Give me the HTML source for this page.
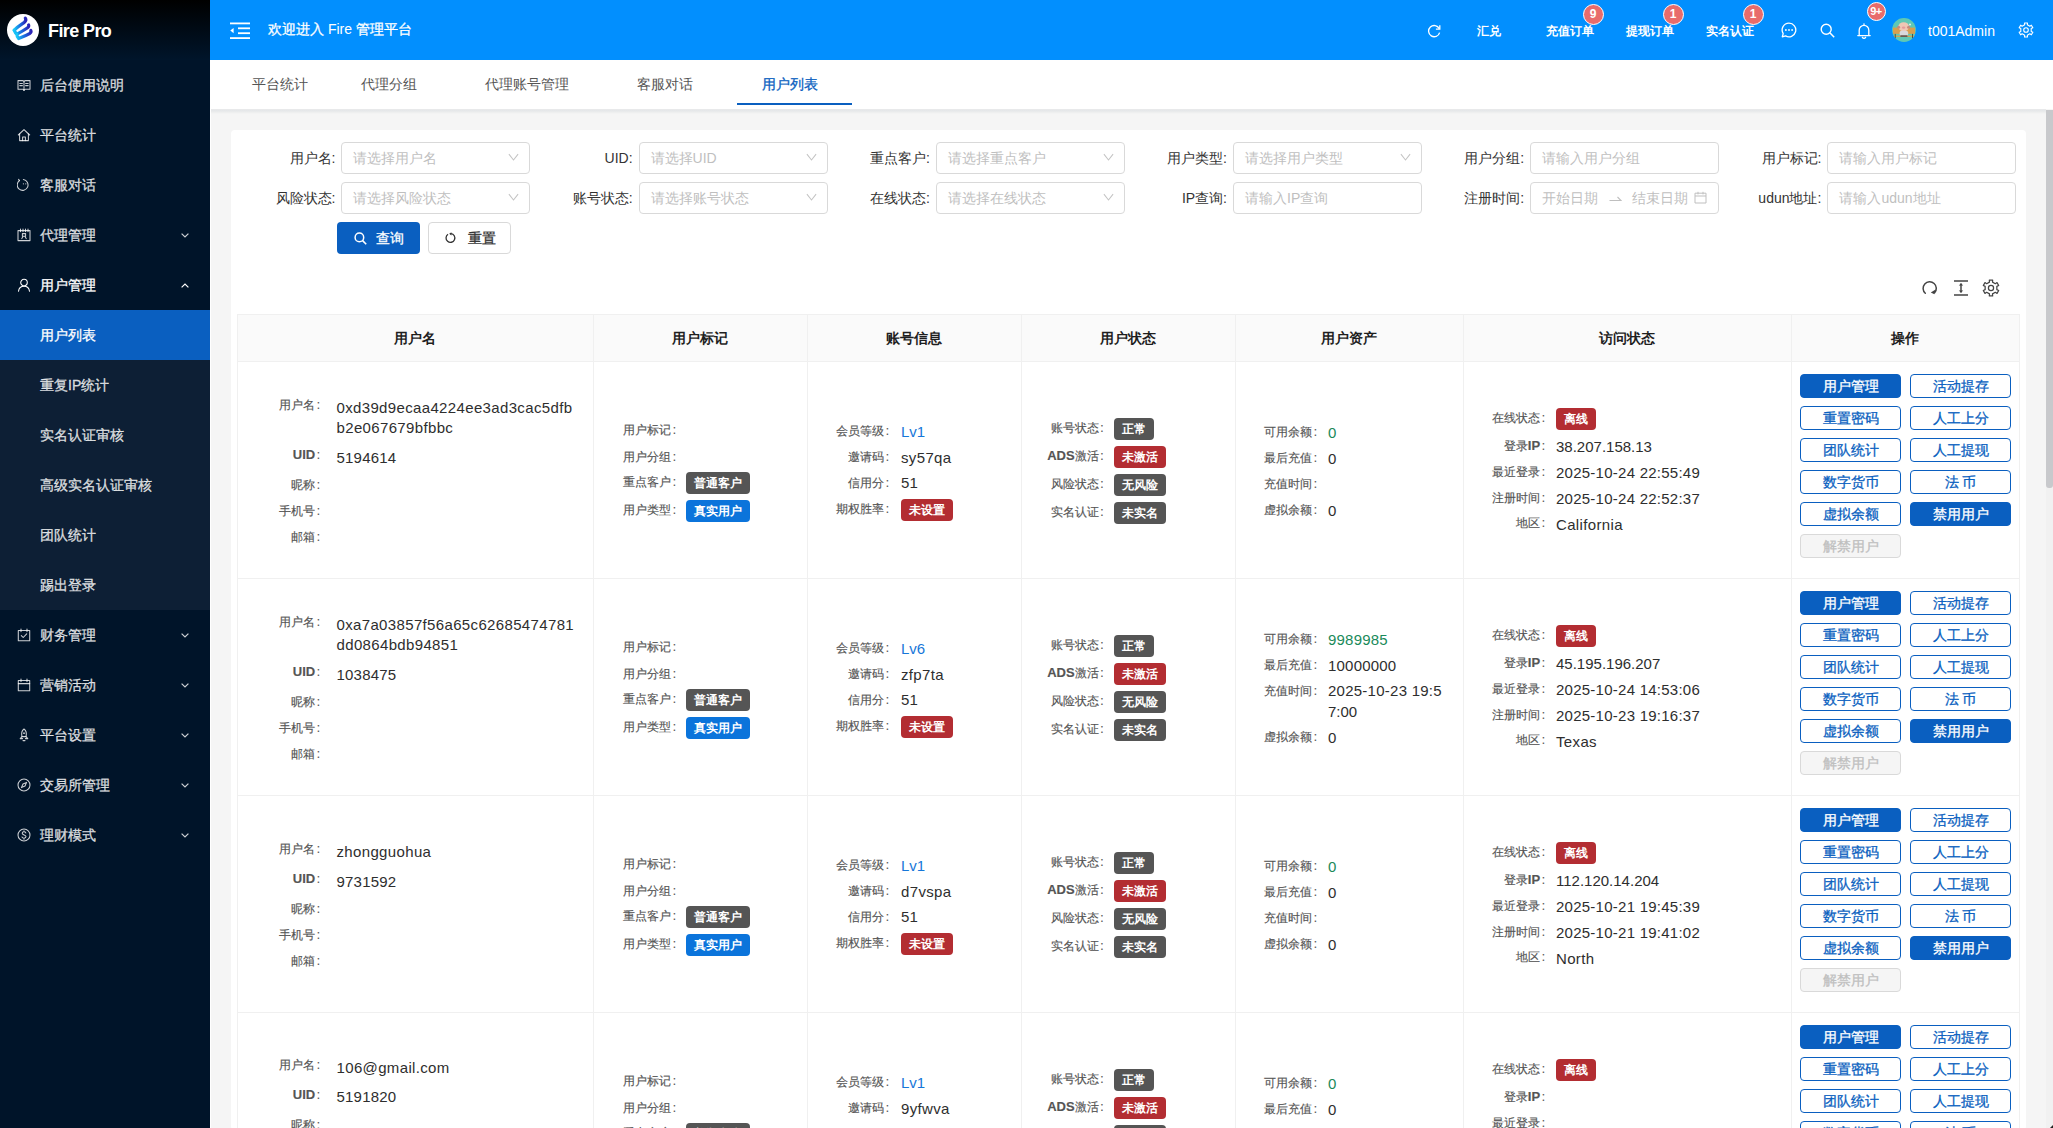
<!DOCTYPE html>
<html><head><meta charset="utf-8"><style>
*{margin:0;padding:0;box-sizing:border-box}
html,body{width:2053px;height:1128px;overflow:hidden;background:#f5f5f5;font-family:"Liberation Sans",sans-serif;color:#333}
.abs{position:absolute}
#side{position:absolute;left:0;top:0;width:210px;height:1128px;background:#001429}
#logo{position:absolute;left:0;top:0;width:210px;height:60px;background:linear-gradient(180deg,#000 0%,#00152b 100%)}
.mi{position:absolute;left:0;width:210px;height:50px;color:rgba(255,255,255,.8);font-size:14px;line-height:50px}
.mi .t{-webkit-text-stroke:0.3px currentColor}
.mi .t{position:absolute;left:40px;top:0}
.mi svg.ic{position:absolute;left:17px;top:18px}
.mi svg.ch{position:absolute;left:181px;top:23px}
#sub{position:absolute;left:0;top:310px;width:210px;height:300px;background:#0d1f35}
#hdr{position:absolute;left:210px;top:0;width:1843px;height:60px;background:#028ffe}
#tabs{position:absolute;left:211px;top:60px;width:1842px;height:49px;background:#fff}
.tab{position:absolute;top:0;line-height:48px;font-size:14px;color:#555}
#card{position:absolute;left:231px;top:130px;width:1795px;height:1000px;background:#fff;border-radius:4px}
.fl{position:absolute;font-size:14px;color:#333;text-align:right;line-height:32px;white-space:nowrap}
.fi{position:absolute;width:189px;height:32px;border:1px solid #d9d9d9;border-radius:4px;background:#fff;font-size:14px;color:#bfbfbf;line-height:30px;padding-left:11px;white-space:nowrap}
.fi svg{position:absolute;right:10px;top:10.4px}
.th{position:absolute;top:314px;height:48px;background:#fafafa;border-top:1px solid #f0f0f0;border-bottom:1px solid #f0f0f0;font-size:14px;font-weight:bold;color:#222;text-align:center;line-height:46px}
.vl{position:absolute;width:1px;background:#f0f0f0}
.hl{position:absolute;height:1px;background:#f0f0f0}
.lb{position:absolute;font-size:12px;color:#555;text-align:right;white-space:nowrap;line-height:16px;-webkit-text-stroke:0.15px #555}
.cl{margin-left:1.5px}
.vv{position:absolute;font-size:15px;color:#2e2e2e;white-space:nowrap;line-height:20px}
.tg{position:absolute;height:22px;border-radius:4px;color:#fff;font-size:12px;font-weight:bold;line-height:22px;text-align:center}
.g{background:#555}.b{background:#0b74db}.r{background:#b32d32}
.bt{position:absolute;width:101px;height:24px;border:1px solid #0a5fc0;border-radius:4px;color:#0a5fc0;font-size:14px;-webkit-text-stroke:0.3px currentColor;text-align:center;line-height:22px;background:#fff}
.bt.p{background:#0a5fc0;color:#fff}
.bt.d{background:#f5f5f5;border-color:#d9d9d9;color:#bfbfbf}

</style></head><body>
<div id="side">
<div id="logo">
<div class="abs" style="left:7px;top:14px;width:32px;height:32px;border-radius:50%;background:#fff"></div>
<svg class="abs" style="left:0;top:0" width="42" height="50" viewBox="0 0 42 50"><defs><linearGradient id="lg" x1="0" y1="0" x2="1" y2="0"><stop offset="0" stop-color="#18c8f8"/><stop offset="0.5" stop-color="#1a6fe0"/><stop offset="1" stop-color="#2b22b5"/></linearGradient></defs><g fill="none" stroke="url(#lg)" stroke-width="3.2" stroke-linecap="round"><path d="M14.2 30.2C17.5 26.8 21 24.6 24 22.6 25.8 21.3 26.2 19.6 25.3 18.2"/><path d="M14.2 30.2C14.8 32 15.6 33.2 17 34.2 20.5 32.2 24.5 29.8 27.2 28 28.6 27 28.9 25.8 28.6 25"/><path d="M17 34.2C16.8 36 17.4 37.4 18.6 38.4 22.5 37 26.5 35.4 29.5 33.6 31 32.6 31.2 31.2 30.8 30.4"/></g></svg>
<div class="abs" style="left:48px;top:20px;font-size:18px;font-weight:bold;color:#fff;line-height:22px;letter-spacing:-0.6px">Fire Pro</div>
</div>
<div id="sub"></div>
<div class="abs" style="left:0;top:310px;width:210px;height:50px;background:#0a5fc0"></div>
<div class="mi" style="top:60px"><svg class="ic" width="14" height="14" viewBox="0 0 14 14" ><g stroke="currentColor" fill="none" stroke-width="1.05" stroke-linecap="round" stroke-linejoin="round"><path d="M1 2.6h4.6c.8 0 1.4.4 1.4 1.2 0-.8.6-1.2 1.4-1.2H13v8.6H8.4c-.8 0-1.4.5-1.4 1.2 0-.7-.6-1.2-1.4-1.2H1z"/><path d="M7 3.8v8.6M2.8 5.4h2.6M2.8 7.6h2.6M8.6 5.4h2.6M8.6 7.6h2.6"/></g></svg><span class="t">后台使用说明</span></div>
<div class="mi" style="top:110px"><svg class="ic" width="14" height="14" viewBox="0 0 14 14" ><g stroke="currentColor" fill="none" stroke-width="1.05" stroke-linecap="round" stroke-linejoin="round"><path d="M1.3 7L7 1.6 12.7 7"/><path d="M2.6 5.8V12.6h8.8V5.8"/><path d="M5.6 12.6V9h2.8v3.6"/></g></svg><span class="t">平台统计</span></div>
<div class="mi" style="top:160px"><svg class="ic" width="14" height="14" viewBox="0 0 14 14" ><g stroke="currentColor" fill="none" stroke-width="1.05" stroke-linecap="round" stroke-linejoin="round"><path d="M2.4 2.6A5.4 5.4 0 1 0 6.4 1.6"/><path d="M2.4 2.6L1.6 1.4"/></g><circle cx="6.4" cy="5.8" r=".6" fill="currentColor"/><circle cx="8.8" cy="5.8" r=".6" fill="currentColor"/></svg><span class="t">客服对话</span></div>
<div class="mi" style="top:210px"><svg class="ic" width="14" height="14" viewBox="0 0 14 14" ><g stroke="currentColor" fill="none" stroke-width="1.05" stroke-linecap="round" stroke-linejoin="round"><path d="M1 2.6h12v10H1z"/><path d="M3.5 1v2.6M6 1v2.6M8.5 1v2.6M11 1v2.6"/><path d="M5.4 5.6h3.2v2.6H5.4zM4.8 10.6L6 8.6M9.2 10.6L8 8.6"/></g></svg><span class="t">代理管理</span><svg class="ch" width="8" height="5" viewBox="0 0 8 5" ><path d="M.6 .6L4 4 7.4 .6" stroke="currentColor" fill="none" stroke-width="1.2"/></svg></div>
<div class="mi" style="top:260px;color:#fff"><svg class="ic" width="14" height="14" viewBox="0 0 14 14" ><g stroke="currentColor" fill="none" stroke-width="1.05" stroke-linecap="round" stroke-linejoin="round"><circle cx="7" cy="4.6" r="3.3"/><path d="M1.5 13.2c.4-3 2.6-5 5.5-5s5.1 2 5.5 5"/></g></svg><span class="t">用户管理</span><svg class="ch" width="8" height="5" viewBox="0 0 8 5" ><path d="M.6 4.4L4 1 7.4 4.4" stroke="currentColor" fill="none" stroke-width="1.2"/></svg></div>
<div class="mi" style="top:310px;color:#fff"><span class="t">用户列表</span></div>
<div class="mi" style="top:360px"><span class="t">重复IP统计</span></div>
<div class="mi" style="top:410px"><span class="t">实名认证审核</span></div>
<div class="mi" style="top:460px"><span class="t">高级实名认证审核</span></div>
<div class="mi" style="top:510px"><span class="t">团队统计</span></div>
<div class="mi" style="top:560px"><span class="t">踢出登录</span></div>
<div class="mi" style="top:610px"><svg class="ic" width="14" height="14" viewBox="0 0 14 14" ><g stroke="currentColor" fill="none" stroke-width="1.05" stroke-linecap="round" stroke-linejoin="round"><path d="M1.3 2.5h11.4v10.2H1.3z"/><path d="M4 1v2.6M10 1v2.6"/><path d="M4.3 7.6l1.9 1.9 3.5-3.6"/></g></svg><span class="t">财务管理</span><svg class="ch" width="8" height="5" viewBox="0 0 8 5" ><path d="M.6 .6L4 4 7.4 .6" stroke="currentColor" fill="none" stroke-width="1.2"/></svg></div>
<div class="mi" style="top:660px"><svg class="ic" width="14" height="14" viewBox="0 0 14 14" ><g stroke="currentColor" fill="none" stroke-width="1.05" stroke-linecap="round" stroke-linejoin="round"><path d="M1.3 2.5h11.4v10.2H1.3z"/><path d="M4 1v2.6M10 1v2.6M1.3 5.6h11.4"/></g></svg><span class="t">营销活动</span><svg class="ch" width="8" height="5" viewBox="0 0 8 5" ><path d="M.6 .6L4 4 7.4 .6" stroke="currentColor" fill="none" stroke-width="1.2"/></svg></div>
<div class="mi" style="top:710px"><svg class="ic" width="14" height="14" viewBox="0 0 14 14" ><g stroke="currentColor" fill="none" stroke-width="1.05" stroke-linecap="round" stroke-linejoin="round"><path d="M7 1c2.2 1.6 2.8 4.3 2 7.6H5C4.2 5.3 4.8 2.6 7 1z"/><path d="M5 8.6L3.2 10.6 5.6 10.6M9 8.6l1.8 2-2.4 0"/><path d="M6 12.6h2"/></g><circle cx="7" cy="5.2" r=".9" fill="currentColor"/></svg><span class="t">平台设置</span><svg class="ch" width="8" height="5" viewBox="0 0 8 5" ><path d="M.6 .6L4 4 7.4 .6" stroke="currentColor" fill="none" stroke-width="1.2"/></svg></div>
<div class="mi" style="top:760px"><svg class="ic" width="14" height="14" viewBox="0 0 14 14" ><g stroke="currentColor" fill="none" stroke-width="1.05" stroke-linecap="round" stroke-linejoin="round"><circle cx="7" cy="7" r="6"/><path d="M9.6 4.4L8 8 4.4 9.6 6 6z"/></g></svg><span class="t">交易所管理</span><svg class="ch" width="8" height="5" viewBox="0 0 8 5" ><path d="M.6 .6L4 4 7.4 .6" stroke="currentColor" fill="none" stroke-width="1.2"/></svg></div>
<div class="mi" style="top:810px"><svg class="ic" width="14" height="14" viewBox="0 0 14 14" ><g stroke="currentColor" fill="none" stroke-width="1.05" stroke-linecap="round" stroke-linejoin="round"><circle cx="7" cy="7" r="6"/><path d="M8.8 4.9c-.3-.7-1-1.1-1.8-1.1-1 0-1.8.6-1.8 1.5 0 2 3.8 1.2 3.8 3.3 0 .9-.9 1.6-2 1.6-.9 0-1.6-.4-2-1.2M7 2.8v1M7 10.2v1"/></g></svg><span class="t">理财模式</span><svg class="ch" width="8" height="5" viewBox="0 0 8 5" ><path d="M.6 .6L4 4 7.4 .6" stroke="currentColor" fill="none" stroke-width="1.2"/></svg></div>
<div class="abs" style="left:210px;top:60px;width:1px;height:1068px;background:#fff"></div>
</div>
<div id="hdr">
<svg class="abs" style="left:20px;top:22px" width="20" height="18" viewBox="0 0 20 18"><g fill="#fff"><rect x="0" y="0.5" width="20" height="1.8"/><rect x="8" y="5.4" width="12" height="1.8"/><rect x="8" y="10.3" width="12" height="1.8"/><rect x="0" y="15.2" width="20" height="1.8"/><path d="M0.3 8.6L3.6 6v5.2z"/></g></svg>
<div class="abs" style="left:58px;top:18px;font-size:14px;color:#fff;line-height:22px;-webkit-text-stroke:0.3px #fff">欢迎进入 <span style="-webkit-text-stroke:0">Fire</span> 管理平台</div>
<svg class="abs" style="left:1217px;top:24px" width="14" height="14" viewBox="0 0 14 14"><path d="M12.2 4.6A5.6 5.6 0 1 0 12.6 8.6" stroke="#fff" fill="none" stroke-width="1.3"/><path d="M12.8 1.2v3.9H8.9" stroke="#fff" fill="none" stroke-width="1.3"/></svg>
<div class="abs" style="left:1267px;top:22px;font-size:12px;font-weight:bold;color:#fff;line-height:18px">汇兑</div>
<div class="abs" style="left:1336px;top:22px;font-size:12px;font-weight:bold;color:#fff;line-height:18px">充值订单</div>
<div class="abs" style="left:1416px;top:22px;font-size:12px;font-weight:bold;color:#fff;line-height:18px">提现订单</div>
<div class="abs" style="left:1496px;top:22px;font-size:12px;font-weight:bold;color:#fff;line-height:18px">实名认证</div>
<div class="abs" style="left:1372.5px;top:4.1px;width:21px;height:21px;border-radius:11px;background:#e86c6c;border:1px solid #fff;color:#fff;font-size:12px;font-weight:bold;text-align:center;line-height:19px">9</div>
<div class="abs" style="left:1452.5px;top:4.1px;width:21px;height:21px;border-radius:11px;background:#e86c6c;border:1px solid #fff;color:#fff;font-size:12px;font-weight:bold;text-align:center;line-height:19px">1</div>
<div class="abs" style="left:1532.5px;top:4.1px;width:21px;height:21px;border-radius:11px;background:#e86c6c;border:1px solid #fff;color:#fff;font-size:12px;font-weight:bold;text-align:center;line-height:19px">1</div>
<svg class="abs" style="left:1571px;top:22px" width="16" height="16" viewBox="0 0 16 16"><path d="M8 1.2a6.8 6.8 0 1 1-3.4 12.7L1.3 14.8l.9-3.2A6.8 6.8 0 0 1 8 1.2z" stroke="#fff" fill="none" stroke-width="1.3" stroke-linejoin="round"/><circle cx="4.9" cy="8" r=".9" fill="#fff"/><circle cx="8" cy="8" r=".9" fill="#fff"/><circle cx="11.1" cy="8" r=".9" fill="#fff"/></svg>
<svg class="abs" style="left:1610px;top:23px" width="15" height="15" viewBox="0 0 15 15"><circle cx="6.2" cy="6.2" r="5" stroke="#fff" fill="none" stroke-width="1.4"/><path d="M9.8 9.8l4.4 4.4" stroke="#fff" stroke-width="1.5"/></svg>
<svg class="abs" style="left:1647px;top:23px" width="14" height="16" viewBox="0 0 14 16"><path d="M2.2 12.6V7.2A4.8 4.8 0 0 1 7 2.4a4.8 4.8 0 0 1 4.8 4.8v5.4M.8 12.6h12.4M5.4 14.4c.4.6 1 .9 1.6.9s1.2-.3 1.6-.9M7 .8v1.6" stroke="#fff" fill="none" stroke-width="1.3" stroke-linecap="round"/></svg>
<div class="abs" style="left:1656.5px;top:1.5px;width:19px;height:19px;border-radius:10px;background:#e86c6c;border:1px solid #fff;color:#fff;font-size:11px;font-weight:bold;text-align:center;line-height:17px;letter-spacing:-0.5px">9+</div>
<svg class="abs" style="left:1682px;top:18px" width="24" height="24" viewBox="0 0 24 24"><defs><clipPath id="avc"><circle cx="12" cy="12" r="11.9"/></clipPath></defs><g clip-path="url(#avc)"><rect width="24" height="24" fill="#5fc8b4"/><rect x="1" y="9.6" width="22" height="6.3" fill="#d7a04f"/><rect x="2" y="17.6" width="20" height="1.3" fill="#dba24e"/><rect x="2.8" y="15.9" width=".8" height="4.6" fill="#3a3a3a"/><rect x="20.2" y="15.9" width=".8" height="4.6" fill="#3a3a3a"/><ellipse cx="11.7" cy="8.8" rx="5.4" ry="4.6" fill="#efc7b4"/><circle cx="6.6" cy="9.2" r="1.5" fill="#c98a7c"/><circle cx="16.6" cy="9.2" r="1.5" fill="#c98a7c"/><ellipse cx="11.6" cy="9.6" rx="1.8" ry="1.2" fill="#e59a9a"/><rect x="7.6" y="12.8" width="8.6" height="5.2" rx="2" fill="#d8d8dc"/><rect x="8.4" y="17.2" width="7" height="1.8" fill="#6e5a52"/><circle cx="18" cy="6.6" r="1" fill="#e8f0f0"/></g></svg>
<div class="abs" style="left:1718px;top:22px;font-size:14px;color:#fff;line-height:18px">t001Admin</div>
<svg class="abs" style="left:1808px;top:22px;color:#fff" width="16" height="16" viewBox="0 0 16 16"><path d="M6.66 2.77L6.52 0.95L9.48 0.95L9.34 2.77L11.86 4.22L13.36 3.19L14.84 5.76L13.20 6.55L13.20 9.45L14.84 10.24L13.36 12.81L11.86 11.78L9.34 13.23L9.48 15.05L6.52 15.05L6.66 13.23L4.14 11.78L2.64 12.81L1.16 10.24L2.80 9.45L2.80 6.55L1.16 5.76L2.64 3.19L4.14 4.22Z" stroke="currentColor" fill="none" stroke-width="1.1" stroke-linejoin="round"/><circle cx="8" cy="8" r="2.3" stroke="currentColor" fill="none" stroke-width="1.1"/></svg>
</div>
<div id="tabs">
<div class="tab" style="left:41px;color:#555">平台统计</div>
<div class="tab" style="left:150px;color:#555">代理分组</div>
<div class="tab" style="left:274px;color:#555">代理账号管理</div>
<div class="tab" style="left:426px;color:#555">客服对话</div>
<div class="tab" style="left:551px;color:#0a5fc0;-webkit-text-stroke:0.3px #0a5fc0">用户列表</div>
<div class="abs" style="left:526px;top:42.5px;width:115px;height:2px;background:#0a5fc0"></div>
</div>
<div class="abs" style="left:211px;top:109px;width:1835px;height:5px;background:linear-gradient(180deg,#e9eaeb 0%,#e5e7e9 35%,#eeefef 70%,#f5f5f5 100%)"></div>
<div id="card"></div>
<div class="fl" style="left:191.39999999999998px;top:142px;width:144px">用户名:</div>
<div class="fi" style="left:341.4px;top:142px">请选择用户名<svg width="11" height="8" viewBox="0 0 11 8"><path d="M.9 1.2L5.5 7 10.1 1.2" stroke="#c4c4c4" fill="none" stroke-width="1.05"/></svg></div>
<div class="fl" style="left:488.6px;top:142px;width:144px">UID:</div>
<div class="fi" style="left:638.6px;top:142px">请选择UID<svg width="11" height="8" viewBox="0 0 11 8"><path d="M.9 1.2L5.5 7 10.1 1.2" stroke="#c4c4c4" fill="none" stroke-width="1.05"/></svg></div>
<div class="fl" style="left:785.8px;top:142px;width:144px">重点客户:</div>
<div class="fi" style="left:935.8px;top:142px">请选择重点客户<svg width="11" height="8" viewBox="0 0 11 8"><path d="M.9 1.2L5.5 7 10.1 1.2" stroke="#c4c4c4" fill="none" stroke-width="1.05"/></svg></div>
<div class="fl" style="left:1083.0px;top:142px;width:144px">用户类型:</div>
<div class="fi" style="left:1233.0px;top:142px">请选择用户类型<svg width="11" height="8" viewBox="0 0 11 8"><path d="M.9 1.2L5.5 7 10.1 1.2" stroke="#c4c4c4" fill="none" stroke-width="1.05"/></svg></div>
<div class="fl" style="left:1380.2px;top:142px;width:144px">用户分组:</div>
<div class="fi" style="left:1530.2px;top:142px">请输入用户分组</div>
<div class="fl" style="left:1677.4px;top:142px;width:144px">用户标记:</div>
<div class="fi" style="left:1827.4px;top:142px">请输入用户标记</div>
<div class="fl" style="left:191.39999999999998px;top:182px;width:144px">风险状态:</div>
<div class="fi" style="left:341.4px;top:182px">请选择风险状态<svg width="11" height="8" viewBox="0 0 11 8"><path d="M.9 1.2L5.5 7 10.1 1.2" stroke="#c4c4c4" fill="none" stroke-width="1.05"/></svg></div>
<div class="fl" style="left:488.6px;top:182px;width:144px">账号状态:</div>
<div class="fi" style="left:638.6px;top:182px">请选择账号状态<svg width="11" height="8" viewBox="0 0 11 8"><path d="M.9 1.2L5.5 7 10.1 1.2" stroke="#c4c4c4" fill="none" stroke-width="1.05"/></svg></div>
<div class="fl" style="left:785.8px;top:182px;width:144px">在线状态:</div>
<div class="fi" style="left:935.8px;top:182px">请选择在线状态<svg width="11" height="8" viewBox="0 0 11 8"><path d="M.9 1.2L5.5 7 10.1 1.2" stroke="#c4c4c4" fill="none" stroke-width="1.05"/></svg></div>
<div class="fl" style="left:1083.0px;top:182px;width:144px">IP查询:</div>
<div class="fi" style="left:1233.0px;top:182px">请输入IP查询</div>
<div class="fl" style="left:1380.2px;top:182px;width:144px">注册时间:</div>
<div class="fi" style="left:1530.2px;top:182px"><span class="abs" style="left:11px">开始日期</span><svg class="abs" style="left:78px;top:11px" width="13" height="8" viewBox="0 0 13 8"><path d="M.5 6.5h11.5L8.5 3" stroke="#bfbfbf" fill="none" stroke-width="1.1"/></svg><span class="abs" style="left:101px">结束日期</span><svg class="abs" style="left:163px;top:8px" width="13" height="13" viewBox="0 0 13 13"><path d="M1 2.2h11v9.8H1zM1 5h11M4 .8v2.6M9 .8v2.6" stroke="#bfbfbf" fill="none" stroke-width="1"/></svg></div>
<div class="fl" style="left:1677.4px;top:182px;width:144px">udun地址:</div>
<div class="fi" style="left:1827.4px;top:182px">请输入udun地址</div>
<div class="abs" style="left:337px;top:222px;width:83px;height:32px;border-radius:4px;background:#0a5fc0;color:#fff;font-size:14px;-webkit-text-stroke:0.3px #fff;line-height:32px"><svg class="abs" style="left:17px;top:10px" width="13" height="13" viewBox="0 0 13 13"><circle cx="5.4" cy="5.4" r="4.3" stroke="#fff" fill="none" stroke-width="1.5"/><path d="M8.6 8.6l3.6 3.6" stroke="#fff" stroke-width="1.6"/></svg><span class="abs" style="left:39px">查询</span></div>
<div class="abs" style="left:428px;top:222px;width:83px;height:32px;border-radius:4px;border:1px solid #d9d9d9;background:#fff;color:#333;font-size:14px;-webkit-text-stroke:0.3px #333;line-height:30px"><svg class="abs" style="left:16px;top:9px" width="12" height="12" viewBox="0 0 12 12"><path d="M3 2.3A4.4 4.4 0 1 0 6 1.6" stroke="#333" fill="none" stroke-width="1.3"/><path d="M6.4 .2L4.2 1.8 6.4 3.4z" fill="#333"/></svg><span class="abs" style="left:39px">重置</span></div>
<svg class="abs" style="left:1922px;top:280px" width="16" height="16" viewBox="0 0 16 16"><path d="M3.3 13.3A6.6 6.6 0 1 1 12.6 12.8" stroke="#444" fill="none" stroke-width="1.5" stroke-linecap="round"/><path d="M13.6 9.6L12.4 14.2 8.8 12.6z" fill="#444"/></svg>
<svg class="abs" style="left:1954px;top:280px" width="14" height="16" viewBox="0 0 14 16"><path d="M0 1h14M0 15h14" stroke="#444" stroke-width="1.5"/><path d="M7 3.6v8.8" stroke="#444" stroke-width="1.5"/><path d="M4.8 5.6L7 3.2l2.2 2.4zM4.8 10.4L7 12.8l2.2-2.4z" fill="#444"/></svg>
<svg class="abs" style="left:1982px;top:279px;color:#444" width="18" height="18" viewBox="0 0 16 16"><path d="M6.66 2.77L6.52 0.95L9.48 0.95L9.34 2.77L11.86 4.22L13.36 3.19L14.84 5.76L13.20 6.55L13.20 9.45L14.84 10.24L13.36 12.81L11.86 11.78L9.34 13.23L9.48 15.05L6.52 15.05L6.66 13.23L4.14 11.78L2.64 12.81L1.16 10.24L2.80 9.45L2.80 6.55L1.16 5.76L2.64 3.19L4.14 4.22Z" stroke="currentColor" fill="none" stroke-width="1.1" stroke-linejoin="round"/><circle cx="8" cy="8" r="2.3" stroke="currentColor" fill="none" stroke-width="1.1"/></svg>
<div class="abs" style="left:237px;top:314px;width:1782px;height:48px;background:#fafafa;border-top:1px solid #f0f0f0;border-bottom:1px solid #f0f0f0"></div>
<div class="abs" style="left:237px;top:315px;width:356px;text-align:center;font-size:14px;font-weight:bold;color:#1f1f1f;line-height:46px">用户名</div>
<div class="abs" style="left:593px;top:315px;width:214px;text-align:center;font-size:14px;font-weight:bold;color:#1f1f1f;line-height:46px">用户标记</div>
<div class="abs" style="left:807px;top:315px;width:214px;text-align:center;font-size:14px;font-weight:bold;color:#1f1f1f;line-height:46px">账号信息</div>
<div class="abs" style="left:1021px;top:315px;width:214px;text-align:center;font-size:14px;font-weight:bold;color:#1f1f1f;line-height:46px">用户状态</div>
<div class="abs" style="left:1235px;top:315px;width:228px;text-align:center;font-size:14px;font-weight:bold;color:#1f1f1f;line-height:46px">用户资产</div>
<div class="abs" style="left:1463px;top:315px;width:328px;text-align:center;font-size:14px;font-weight:bold;color:#1f1f1f;line-height:46px">访问状态</div>
<div class="abs" style="left:1791px;top:315px;width:228px;text-align:center;font-size:14px;font-weight:bold;color:#1f1f1f;line-height:46px">操作</div>
<div class="vl" style="left:237px;top:314px;height:820px"></div>
<div class="vl" style="left:593px;top:314px;height:820px"></div>
<div class="vl" style="left:807px;top:314px;height:820px"></div>
<div class="vl" style="left:1021px;top:314px;height:820px"></div>
<div class="vl" style="left:1235px;top:314px;height:820px"></div>
<div class="vl" style="left:1463px;top:314px;height:820px"></div>
<div class="vl" style="left:1791px;top:314px;height:820px"></div>
<div class="vl" style="left:2019px;top:314px;height:820px"></div>
<div class="hl" style="left:237px;top:578px;width:1782px"></div>
<div class="hl" style="left:237px;top:795px;width:1782px"></div>
<div class="hl" style="left:237px;top:1012px;width:1782px"></div>
<div class="lb" style="left:200px;width:120px;top:397.0px">用户名<span class="cl">:</span></div>
<div class="vv" style="left:336.5px;top:398.0px;letter-spacing:0.35px">0xd39d9ecaa4224ee3ad3cac5dfb</div>
<div class="vv" style="left:336.5px;top:417.5px;letter-spacing:0.35px">b2e067679bfbbc</div>
<div class="lb" style="left:200px;width:120px;top:447.0px"><b style="font-weight:bold;font-size:13px">UID</b><span class="cl">:</span></div>
<div class="vv" style="left:336.5px;top:447.6px;letter-spacing:0.2px">5194614</div>
<div class="lb" style="left:200px;width:120px;top:477.0px">昵称<span class="cl">:</span></div>
<div class="lb" style="left:200px;width:120px;top:503.0px">手机号<span class="cl">:</span></div>
<div class="lb" style="left:200px;width:120px;top:529.0px">邮箱<span class="cl">:</span></div>
<div class="lb" style="left:556px;width:120px;top:422.0px">用户标记<span class="cl">:</span></div>
<div class="lb" style="left:556px;width:120px;top:448.5px">用户分组<span class="cl">:</span></div>
<div class="lb" style="left:556px;width:120px;top:474.3px">重点客户<span class="cl">:</span></div>
<div class="tg g" style="left:686px;top:472.2px;width:64px">普通客户</div>
<div class="lb" style="left:556px;width:120px;top:502.0px">用户类型<span class="cl">:</span></div>
<div class="tg b" style="left:686px;top:500.2px;width:64px">真实用户</div>
<div class="lb" style="left:769px;width:120px;top:423.0px">会员等级<span class="cl">:</span></div>
<div class="vv" style="left:901px;top:421.8px;color:#1677d9">Lv1</div>
<div class="lb" style="left:769px;width:120px;top:449.0px">邀请码<span class="cl">:</span></div>
<div class="vv" style="left:901px;top:447.9px;letter-spacing:0.35px">sy57qa</div>
<div class="lb" style="left:769px;width:120px;top:475.0px">信用分<span class="cl">:</span></div>
<div class="vv" style="left:901px;top:473.4px;letter-spacing:0.2px">51</div>
<div class="lb" style="left:769px;width:120px;top:500.6px">期权胜率<span class="cl">:</span></div>
<div class="tg r" style="left:901px;top:499px;width:52px">未设置</div>
<div class="lb" style="left:983.5px;width:120px;top:420.0px">账号状态<span class="cl">:</span></div>
<div class="tg g" style="left:1114px;top:418px;width:40px">正常</div>
<div class="lb" style="left:983.5px;width:120px;top:448.0px"><b style="font-weight:bold;font-size:13px">ADS</b>激活<span class="cl">:</span></div>
<div class="tg r" style="left:1114px;top:446.2px;width:52px">未激活</div>
<div class="lb" style="left:983.5px;width:120px;top:476.2px">风险状态<span class="cl">:</span></div>
<div class="tg g" style="left:1114px;top:474.1px;width:52px">无风险</div>
<div class="lb" style="left:983.5px;width:120px;top:503.9px">实名认证<span class="cl">:</span></div>
<div class="tg g" style="left:1114px;top:502.2px;width:52px">未实名</div>
<div class="lb" style="left:1197px;width:120px;top:424.3px">可用余额<span class="cl">:</span></div>
<div class="vv" style="left:1328px;top:422.6px;letter-spacing:0.2px;color:#1a8a5a">0</div>
<div class="lb" style="left:1197px;width:120px;top:450.4px">最后充值<span class="cl">:</span></div>
<div class="vv" style="left:1328px;top:448.7px;letter-spacing:0.2px">0</div>
<div class="lb" style="left:1197px;width:120px;top:476.0px">充值时间<span class="cl">:</span></div>
<div class="lb" style="left:1197px;width:120px;top:501.9px">虚拟余额<span class="cl">:</span></div>
<div class="vv" style="left:1328px;top:500.5px;letter-spacing:0.2px">0</div>
<div class="lb" style="left:1425px;width:120px;top:410.0px">在线状态<span class="cl">:</span></div>
<div class="tg r" style="left:1556px;top:408px;width:40px">离线</div>
<div class="lb" style="left:1425px;width:120px;top:438.2px">登录<b style="font-weight:bold;font-size:13px">IP</b><span class="cl">:</span></div>
<div class="vv" style="left:1556px;top:436.5px">38.207.158.13</div>
<div class="lb" style="left:1425px;width:120px;top:464.3px">最近登录<span class="cl">:</span></div>
<div class="vv" style="left:1556px;top:462.5px;letter-spacing:0.25px">2025-10-24 22:55:49</div>
<div class="lb" style="left:1425px;width:120px;top:490.0px">注册时间<span class="cl">:</span></div>
<div class="vv" style="left:1556px;top:488.6px;letter-spacing:0.25px">2025-10-24 22:52:37</div>
<div class="lb" style="left:1425px;width:120px;top:515.0px">地区<span class="cl">:</span></div>
<div class="vv" style="left:1556px;top:514.7px;letter-spacing:0.35px">California</div>
<div class="bt p" style="left:1800px;top:374px">用户管理</div>
<div class="bt " style="left:1910px;top:374px">活动提存</div>
<div class="bt " style="left:1800px;top:406px">重置密码</div>
<div class="bt " style="left:1910px;top:406px">人工上分</div>
<div class="bt " style="left:1800px;top:438px">团队统计</div>
<div class="bt " style="left:1910px;top:438px">人工提现</div>
<div class="bt " style="left:1800px;top:470px">数字货币</div>
<div class="bt " style="left:1910px;top:470px">法 币</div>
<div class="bt " style="left:1800px;top:502px">虚拟余额</div>
<div class="bt p" style="left:1910px;top:502px">禁用用户</div>
<div class="bt d" style="left:1800px;top:534px">解禁用户</div>
<div class="lb" style="left:200px;width:120px;top:614.0px">用户名<span class="cl">:</span></div>
<div class="vv" style="left:336.5px;top:615.0px;letter-spacing:0.35px">0xa7a03857f56a65c62685474781</div>
<div class="vv" style="left:336.5px;top:634.5px;letter-spacing:0.35px">dd0864bdb94851</div>
<div class="lb" style="left:200px;width:120px;top:664.0px"><b style="font-weight:bold;font-size:13px">UID</b><span class="cl">:</span></div>
<div class="vv" style="left:336.5px;top:664.6px;letter-spacing:0.2px">1038475</div>
<div class="lb" style="left:200px;width:120px;top:694.0px">昵称<span class="cl">:</span></div>
<div class="lb" style="left:200px;width:120px;top:720.0px">手机号<span class="cl">:</span></div>
<div class="lb" style="left:200px;width:120px;top:746.0px">邮箱<span class="cl">:</span></div>
<div class="lb" style="left:556px;width:120px;top:639.0px">用户标记<span class="cl">:</span></div>
<div class="lb" style="left:556px;width:120px;top:665.5px">用户分组<span class="cl">:</span></div>
<div class="lb" style="left:556px;width:120px;top:691.3px">重点客户<span class="cl">:</span></div>
<div class="tg g" style="left:686px;top:689.2px;width:64px">普通客户</div>
<div class="lb" style="left:556px;width:120px;top:719.0px">用户类型<span class="cl">:</span></div>
<div class="tg b" style="left:686px;top:717.2px;width:64px">真实用户</div>
<div class="lb" style="left:769px;width:120px;top:640.0px">会员等级<span class="cl">:</span></div>
<div class="vv" style="left:901px;top:638.8px;color:#1677d9">Lv6</div>
<div class="lb" style="left:769px;width:120px;top:666.0px">邀请码<span class="cl">:</span></div>
<div class="vv" style="left:901px;top:664.9px;letter-spacing:0.35px">zfp7ta</div>
<div class="lb" style="left:769px;width:120px;top:692.0px">信用分<span class="cl">:</span></div>
<div class="vv" style="left:901px;top:690.4px;letter-spacing:0.2px">51</div>
<div class="lb" style="left:769px;width:120px;top:717.6px">期权胜率<span class="cl">:</span></div>
<div class="tg r" style="left:901px;top:716px;width:52px">未设置</div>
<div class="lb" style="left:983.5px;width:120px;top:637.0px">账号状态<span class="cl">:</span></div>
<div class="tg g" style="left:1114px;top:635px;width:40px">正常</div>
<div class="lb" style="left:983.5px;width:120px;top:665.0px"><b style="font-weight:bold;font-size:13px">ADS</b>激活<span class="cl">:</span></div>
<div class="tg r" style="left:1114px;top:663.2px;width:52px">未激活</div>
<div class="lb" style="left:983.5px;width:120px;top:693.2px">风险状态<span class="cl">:</span></div>
<div class="tg g" style="left:1114px;top:691.1px;width:52px">无风险</div>
<div class="lb" style="left:983.5px;width:120px;top:720.9px">实名认证<span class="cl">:</span></div>
<div class="tg g" style="left:1114px;top:719.2px;width:52px">未实名</div>
<div class="lb" style="left:1197px;width:120px;top:631.3px">可用余额<span class="cl">:</span></div>
<div class="vv" style="left:1328px;top:629.6px;letter-spacing:0.2px;color:#1a8a5a">9989985</div>
<div class="lb" style="left:1197px;width:120px;top:657.4px">最后充值<span class="cl">:</span></div>
<div class="vv" style="left:1328px;top:655.7px;letter-spacing:0.2px">10000000</div>
<div class="lb" style="left:1197px;width:120px;top:683.0px">充值时间<span class="cl">:</span></div>
<div class="vv" style="left:1328px;top:681.3px;letter-spacing:0.25px">2025-10-23 19:5</div>
<div class="vv" style="left:1328px;top:701.8px">7:00</div>
<div class="lb" style="left:1197px;width:120px;top:728.9px">虚拟余额<span class="cl">:</span></div>
<div class="vv" style="left:1328px;top:727.5px;letter-spacing:0.2px">0</div>
<div class="lb" style="left:1425px;width:120px;top:627.0px">在线状态<span class="cl">:</span></div>
<div class="tg r" style="left:1556px;top:625px;width:40px">离线</div>
<div class="lb" style="left:1425px;width:120px;top:655.2px">登录<b style="font-weight:bold;font-size:13px">IP</b><span class="cl">:</span></div>
<div class="vv" style="left:1556px;top:653.5px">45.195.196.207</div>
<div class="lb" style="left:1425px;width:120px;top:681.3px">最近登录<span class="cl">:</span></div>
<div class="vv" style="left:1556px;top:679.5px;letter-spacing:0.25px">2025-10-24 14:53:06</div>
<div class="lb" style="left:1425px;width:120px;top:707.0px">注册时间<span class="cl">:</span></div>
<div class="vv" style="left:1556px;top:705.6px;letter-spacing:0.25px">2025-10-23 19:16:37</div>
<div class="lb" style="left:1425px;width:120px;top:732.0px">地区<span class="cl">:</span></div>
<div class="vv" style="left:1556px;top:731.7px;letter-spacing:0.35px">Texas</div>
<div class="bt p" style="left:1800px;top:591px">用户管理</div>
<div class="bt " style="left:1910px;top:591px">活动提存</div>
<div class="bt " style="left:1800px;top:623px">重置密码</div>
<div class="bt " style="left:1910px;top:623px">人工上分</div>
<div class="bt " style="left:1800px;top:655px">团队统计</div>
<div class="bt " style="left:1910px;top:655px">人工提现</div>
<div class="bt " style="left:1800px;top:687px">数字货币</div>
<div class="bt " style="left:1910px;top:687px">法 币</div>
<div class="bt " style="left:1800px;top:719px">虚拟余额</div>
<div class="bt p" style="left:1910px;top:719px">禁用用户</div>
<div class="bt d" style="left:1800px;top:751px">解禁用户</div>
<div class="lb" style="left:200px;width:120px;top:841.0px">用户名<span class="cl">:</span></div>
<div class="vv" style="left:336.5px;top:842.0px;letter-spacing:0.35px">zhongguohua</div>
<div class="lb" style="left:200px;width:120px;top:871.0px"><b style="font-weight:bold;font-size:13px">UID</b><span class="cl">:</span></div>
<div class="vv" style="left:336.5px;top:871.6px;letter-spacing:0.2px">9731592</div>
<div class="lb" style="left:200px;width:120px;top:901.0px">昵称<span class="cl">:</span></div>
<div class="lb" style="left:200px;width:120px;top:927.0px">手机号<span class="cl">:</span></div>
<div class="lb" style="left:200px;width:120px;top:953.0px">邮箱<span class="cl">:</span></div>
<div class="lb" style="left:556px;width:120px;top:856.0px">用户标记<span class="cl">:</span></div>
<div class="lb" style="left:556px;width:120px;top:882.5px">用户分组<span class="cl">:</span></div>
<div class="lb" style="left:556px;width:120px;top:908.3px">重点客户<span class="cl">:</span></div>
<div class="tg g" style="left:686px;top:906.2px;width:64px">普通客户</div>
<div class="lb" style="left:556px;width:120px;top:936.0px">用户类型<span class="cl">:</span></div>
<div class="tg b" style="left:686px;top:934.2px;width:64px">真实用户</div>
<div class="lb" style="left:769px;width:120px;top:857.0px">会员等级<span class="cl">:</span></div>
<div class="vv" style="left:901px;top:855.8px;color:#1677d9">Lv1</div>
<div class="lb" style="left:769px;width:120px;top:883.0px">邀请码<span class="cl">:</span></div>
<div class="vv" style="left:901px;top:881.9px;letter-spacing:0.35px">d7vspa</div>
<div class="lb" style="left:769px;width:120px;top:909.0px">信用分<span class="cl">:</span></div>
<div class="vv" style="left:901px;top:907.4px;letter-spacing:0.2px">51</div>
<div class="lb" style="left:769px;width:120px;top:934.6px">期权胜率<span class="cl">:</span></div>
<div class="tg r" style="left:901px;top:933px;width:52px">未设置</div>
<div class="lb" style="left:983.5px;width:120px;top:854.0px">账号状态<span class="cl">:</span></div>
<div class="tg g" style="left:1114px;top:852px;width:40px">正常</div>
<div class="lb" style="left:983.5px;width:120px;top:882.0px"><b style="font-weight:bold;font-size:13px">ADS</b>激活<span class="cl">:</span></div>
<div class="tg r" style="left:1114px;top:880.2px;width:52px">未激活</div>
<div class="lb" style="left:983.5px;width:120px;top:910.2px">风险状态<span class="cl">:</span></div>
<div class="tg g" style="left:1114px;top:908.1px;width:52px">无风险</div>
<div class="lb" style="left:983.5px;width:120px;top:937.9px">实名认证<span class="cl">:</span></div>
<div class="tg g" style="left:1114px;top:936.2px;width:52px">未实名</div>
<div class="lb" style="left:1197px;width:120px;top:858.3px">可用余额<span class="cl">:</span></div>
<div class="vv" style="left:1328px;top:856.6px;letter-spacing:0.2px;color:#1a8a5a">0</div>
<div class="lb" style="left:1197px;width:120px;top:884.4px">最后充值<span class="cl">:</span></div>
<div class="vv" style="left:1328px;top:882.7px;letter-spacing:0.2px">0</div>
<div class="lb" style="left:1197px;width:120px;top:910.0px">充值时间<span class="cl">:</span></div>
<div class="lb" style="left:1197px;width:120px;top:935.9px">虚拟余额<span class="cl">:</span></div>
<div class="vv" style="left:1328px;top:934.5px;letter-spacing:0.2px">0</div>
<div class="lb" style="left:1425px;width:120px;top:844.0px">在线状态<span class="cl">:</span></div>
<div class="tg r" style="left:1556px;top:842px;width:40px">离线</div>
<div class="lb" style="left:1425px;width:120px;top:872.2px">登录<b style="font-weight:bold;font-size:13px">IP</b><span class="cl">:</span></div>
<div class="vv" style="left:1556px;top:870.5px">112.120.14.204</div>
<div class="lb" style="left:1425px;width:120px;top:898.3px">最近登录<span class="cl">:</span></div>
<div class="vv" style="left:1556px;top:896.5px;letter-spacing:0.25px">2025-10-21 19:45:39</div>
<div class="lb" style="left:1425px;width:120px;top:924.0px">注册时间<span class="cl">:</span></div>
<div class="vv" style="left:1556px;top:922.6px;letter-spacing:0.25px">2025-10-21 19:41:02</div>
<div class="lb" style="left:1425px;width:120px;top:949.0px">地区<span class="cl">:</span></div>
<div class="vv" style="left:1556px;top:948.7px;letter-spacing:0.35px">North</div>
<div class="bt p" style="left:1800px;top:808px">用户管理</div>
<div class="bt " style="left:1910px;top:808px">活动提存</div>
<div class="bt " style="left:1800px;top:840px">重置密码</div>
<div class="bt " style="left:1910px;top:840px">人工上分</div>
<div class="bt " style="left:1800px;top:872px">团队统计</div>
<div class="bt " style="left:1910px;top:872px">人工提现</div>
<div class="bt " style="left:1800px;top:904px">数字货币</div>
<div class="bt " style="left:1910px;top:904px">法 币</div>
<div class="bt " style="left:1800px;top:936px">虚拟余额</div>
<div class="bt p" style="left:1910px;top:936px">禁用用户</div>
<div class="bt d" style="left:1800px;top:968px">解禁用户</div>
<div class="lb" style="left:200px;width:120px;top:1056.5px">用户名<span class="cl">:</span></div>
<div class="vv" style="left:336.5px;top:1057.5px;letter-spacing:0.35px">106@gmail.com</div>
<div class="lb" style="left:200px;width:120px;top:1086.5px"><b style="font-weight:bold;font-size:13px">UID</b><span class="cl">:</span></div>
<div class="vv" style="left:336.5px;top:1087.1px;letter-spacing:0.2px">5191820</div>
<div class="lb" style="left:200px;width:120px;top:1116.5px">昵称<span class="cl">:</span></div>
<div class="lb" style="left:200px;width:120px;top:1142.5px">手机号<span class="cl">:</span></div>
<div class="lb" style="left:200px;width:120px;top:1168.5px">邮箱<span class="cl">:</span></div>
<div class="lb" style="left:556px;width:120px;top:1073.0px">用户标记<span class="cl">:</span></div>
<div class="lb" style="left:556px;width:120px;top:1099.5px">用户分组<span class="cl">:</span></div>
<div class="lb" style="left:556px;width:120px;top:1125.3px">重点客户<span class="cl">:</span></div>
<div class="tg g" style="left:686px;top:1123.2px;width:64px">普通客户</div>
<div class="lb" style="left:556px;width:120px;top:1153.0px">用户类型<span class="cl">:</span></div>
<div class="tg b" style="left:686px;top:1151.2px;width:64px">真实用户</div>
<div class="lb" style="left:769px;width:120px;top:1074.0px">会员等级<span class="cl">:</span></div>
<div class="vv" style="left:901px;top:1072.8px;color:#1677d9">Lv1</div>
<div class="lb" style="left:769px;width:120px;top:1100.0px">邀请码<span class="cl">:</span></div>
<div class="vv" style="left:901px;top:1098.9px;letter-spacing:0.35px">9yfwva</div>
<div class="lb" style="left:769px;width:120px;top:1126.0px">信用分<span class="cl">:</span></div>
<div class="vv" style="left:901px;top:1124.4px;letter-spacing:0.2px">51</div>
<div class="lb" style="left:769px;width:120px;top:1151.6px">期权胜率<span class="cl">:</span></div>
<div class="tg r" style="left:901px;top:1150px;width:52px">未设置</div>
<div class="lb" style="left:983.5px;width:120px;top:1071.0px">账号状态<span class="cl">:</span></div>
<div class="tg g" style="left:1114px;top:1069px;width:40px">正常</div>
<div class="lb" style="left:983.5px;width:120px;top:1099.0px"><b style="font-weight:bold;font-size:13px">ADS</b>激活<span class="cl">:</span></div>
<div class="tg r" style="left:1114px;top:1097.2px;width:52px">未激活</div>
<div class="lb" style="left:983.5px;width:120px;top:1127.2px">风险状态<span class="cl">:</span></div>
<div class="tg g" style="left:1114px;top:1125.1px;width:52px">无风险</div>
<div class="lb" style="left:983.5px;width:120px;top:1154.9px">实名认证<span class="cl">:</span></div>
<div class="tg g" style="left:1114px;top:1153.2px;width:52px">未实名</div>
<div class="lb" style="left:1197px;width:120px;top:1075.3px">可用余额<span class="cl">:</span></div>
<div class="vv" style="left:1328px;top:1073.6px;letter-spacing:0.2px;color:#1a8a5a">0</div>
<div class="lb" style="left:1197px;width:120px;top:1101.4px">最后充值<span class="cl">:</span></div>
<div class="vv" style="left:1328px;top:1099.7px;letter-spacing:0.2px">0</div>
<div class="lb" style="left:1197px;width:120px;top:1127.0px">充值时间<span class="cl">:</span></div>
<div class="lb" style="left:1197px;width:120px;top:1152.9px">虚拟余额<span class="cl">:</span></div>
<div class="vv" style="left:1328px;top:1151.5px;letter-spacing:0.2px">0</div>
<div class="lb" style="left:1425px;width:120px;top:1061.0px">在线状态<span class="cl">:</span></div>
<div class="tg r" style="left:1556px;top:1059px;width:40px">离线</div>
<div class="lb" style="left:1425px;width:120px;top:1089.2px">登录<b style="font-weight:bold;font-size:13px">IP</b><span class="cl">:</span></div>
<div class="vv" style="left:1556px;top:1087.5px"></div>
<div class="lb" style="left:1425px;width:120px;top:1115.3px">最近登录<span class="cl">:</span></div>
<div class="vv" style="left:1556px;top:1113.5px"></div>
<div class="lb" style="left:1425px;width:120px;top:1141.0px">注册时间<span class="cl">:</span></div>
<div class="vv" style="left:1556px;top:1139.6px"></div>
<div class="lb" style="left:1425px;width:120px;top:1166.0px">地区<span class="cl">:</span></div>
<div class="vv" style="left:1556px;top:1165.7px"></div>
<div class="bt p" style="left:1800px;top:1025px">用户管理</div>
<div class="bt " style="left:1910px;top:1025px">活动提存</div>
<div class="bt " style="left:1800px;top:1057px">重置密码</div>
<div class="bt " style="left:1910px;top:1057px">人工上分</div>
<div class="bt " style="left:1800px;top:1089px">团队统计</div>
<div class="bt " style="left:1910px;top:1089px">人工提现</div>
<div class="bt " style="left:1800px;top:1121px">数字货币</div>
<div class="bt " style="left:1910px;top:1121px">法 币</div>
<div class="bt " style="left:1800px;top:1153px">虚拟余额</div>
<div class="bt p" style="left:1910px;top:1153px">禁用用户</div>
<div class="bt d" style="left:1800px;top:1185px">解禁用户</div>
<div class="abs" style="left:2046px;top:110px;width:7px;height:1018px;background:#f1f1f1"></div>
<div class="abs" style="left:2046px;top:110px;width:7px;height:378px;background:#c8c9cc;border-radius:0 0 3px 3px"></div>
<div class="abs" style="left:2044px;top:1116px;width:18px;height:18px;border-radius:50%;background:#222;clip-path:polygon(100% 0,100% 100%,0 100%)"></div>
</body></html>
